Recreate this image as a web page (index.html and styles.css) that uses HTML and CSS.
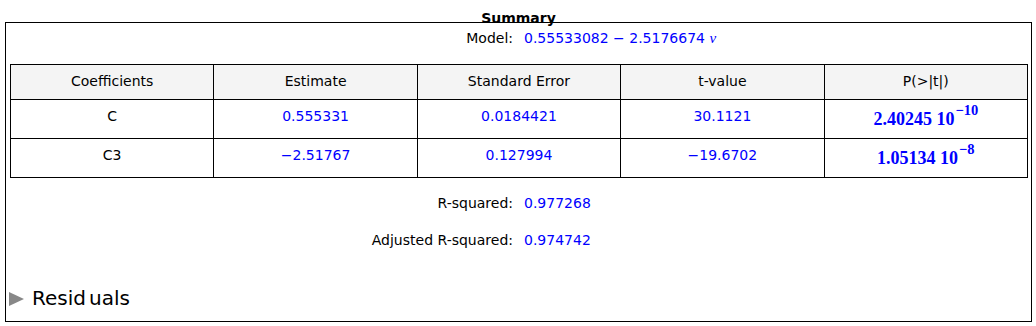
FILE: index.html
```html
<!DOCTYPE html>
<html>
<head>
<meta charset="utf-8">
<link rel="stylesheet" href="styles.css">
</head>
<body>
<div class="panel">
  <div class="title">Summary</div>
  <div class="box">
    <div class="kv model"><span class="k">Model:</span><span class="v">0.55533082 − 2.5176674 <span class="nu">ν</span></span></div>
    <table class="coef">
      <thead>
        <tr><th>Coefficients</th><th>Estimate</th><th>Standard Error</th><th>t-value</th><th>P(&gt;|t|)</th></tr>
      </thead>
      <tbody>
        <tr><td>C</td><td class="num">0.555331</td><td class="num">0.0184421</td><td class="num">30.1121</td><td class="pcell"><span class="pv">2.40245 10<sup>−10</sup></span></td></tr>
        <tr><td>C3</td><td class="num">−2.51767</td><td class="num">0.127994</td><td class="num">−19.6702</td><td class="pcell"><span class="pv">1.05134 10<sup>−8</sup></span></td></tr>
      </tbody>
    </table>
    <div class="kv r1"><span class="k">R-squared:</span><span class="v">0.977268</span></div>
    <div class="kv r2"><span class="k">Adjusted R-squared:</span><span class="v">0.974742</span></div>
    <div class="res"><span class="tri"></span><span class="res-label">Resid<span class="gap">uals</span></span></div>
  </div>
</div>
</body>
</html>
```
FILE: styles.css
```css
html, body {
  margin: 0;
  background: #fff;
}
body {
  font-family: "DejaVu Sans", sans-serif;
  font-size: 14px;
  line-height: 16px;
  color: #000;
}
.panel {
  margin: 10px 4px 0 5px;
}
.title {
  text-align: center;
  font-weight: bold;
  height: 16px;
  margin-bottom: -4px;
}
.box {
  border: 1px solid #000;
  height: 300px;
  box-sizing: border-box;
  padding-top: 7px;
}
.kv {
  display: grid;
  grid-template-columns: 1fr 1fr;
  column-gap: 11px;
}
.kv .k {
  text-align: right;
}
.kv .v {
  color: #0000ff;
}
.nu {
  font-family: "Liberation Serif", serif;
  font-style: italic;
  font-size: 15px;
}
.coef {
  width: 1018px;
  margin: 18px 0 0 4px;
  border-collapse: collapse;
  table-layout: fixed;
}
.coef th, .coef td {
  border: 1px solid #000;
  text-align: center;
  vertical-align: top;
  font-weight: normal;
  padding: 8px 4px 14px;
}
.coef th {
  background: #f4f4f4;
  padding-bottom: 10px;
}
.coef td.num {
  color: #0000ff;
}
.coef td.pcell {
  padding-top: 10px;
  padding-bottom: 8px;
}
.pv {
  font-family: "Liberation Serif", serif;
  font-weight: bold;
  font-size: 18px;
  color: #0000ff;
}
.pv sup {
  font-size: 14.5px;
  line-height: 0;
  vertical-align: 10px;
  margin-left: 1px;
}
.r1 {
  margin-top: 17px;
}
.r2 {
  margin-top: 21px;
}
.res {
  margin-top: 39px;
  display: flex;
  align-items: center;
  font-size: 20px;
  line-height: 23px;
  padding-left: 3px;
}
.tri {
  width: 0;
  height: 0;
  border-left: 15px solid #888;
  border-top: 7px solid transparent;
  border-bottom: 7px solid transparent;
  margin-right: 8px;
}
.gap {
  margin-left: 3px;
}
```
